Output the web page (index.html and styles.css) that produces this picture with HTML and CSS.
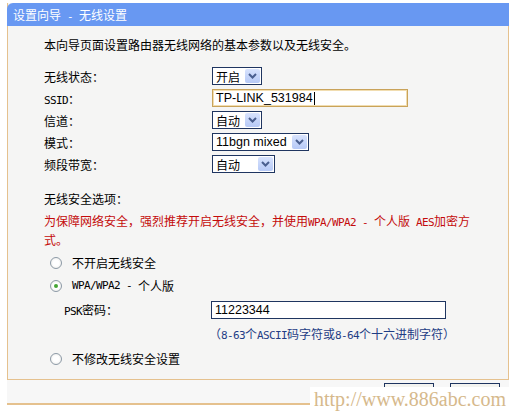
FILE: index.html
```html
<!DOCTYPE html>
<html lang="zh-CN">
<head>
    <meta charset="UTF-8">
    <title>设置向导 - 无线设置</title>
    <link rel="stylesheet" href="styles.css">
</head>
<body>
    <div class="panel">
        <div class="title">设置向导<span class="mono"> - </span>无线设置</div>

        <div class="content">
            <p class="intro">本向导页面设置路由器无线网络的基本参数以及无线安全。</p>

            <!-- 基本参数 -->
            <div class="form">
                <div class="row">
                    <span class="label">无线状态：</span>
                    <div class="select w50"><span class="val">开启</span><span class="drop"><svg width="15" height="14" viewBox="0 0 15 14"><path d="M4 5 L7.5 8.5 L11 5" fill="none" stroke="#4a5f8f" stroke-width="2"/></svg></span></div>
                </div>
                <div class="row">
                    <span class="label"><span class="mono">SSID</span>：</span>
                    <div class="input focus w196"><span class="txt">TP-LINK_531984</span><span class="caret"></span></div>
                </div>
                <div class="row">
                    <span class="label">信道：</span>
                    <div class="select w50"><span class="val">自动</span><span class="drop"><svg width="15" height="14" viewBox="0 0 15 14"><path d="M4 5 L7.5 8.5 L11 5" fill="none" stroke="#4a5f8f" stroke-width="2"/></svg></span></div>
                </div>
                <div class="row">
                    <span class="label">模式：</span>
                    <div class="select w97"><span class="val txt">11bgn mixed</span><span class="drop"><svg width="15" height="14" viewBox="0 0 15 14"><path d="M4 5 L7.5 8.5 L11 5" fill="none" stroke="#4a5f8f" stroke-width="2"/></svg></span></div>
                </div>
                <div class="row">
                    <span class="label">频段带宽：</span>
                    <div class="select w63"><span class="val">自动</span><span class="drop"><svg width="15" height="14" viewBox="0 0 15 14"><path d="M4 5 L7.5 8.5 L11 5" fill="none" stroke="#4a5f8f" stroke-width="2"/></svg></span></div>
                </div>
            </div>

            <!-- 无线安全 -->
            <div class="sec-title">无线安全选项：</div>
            <p class="warn">为保障网络安全，强烈推荐开启无线安全，并使用<span class="mono">WPA/WPA2 - </span>个人版<span class="mono"> AES</span>加密方<br>式。</p>

            <div class="options">
                <div class="opt"><span class="radio"></span>不开启无线安全</div>
                <div class="opt"><span class="radio checked"></span><span class="mono">WPA/WPA2 - </span>个人版</div>
                <div class="psk">
                    <span class="psk-label"><span class="mono">PSK</span>密码：</span>
                    <div class="input w235"><span class="txt">11223344</span></div>
                </div>
                <div class="hint">（<span class="mono">8-63</span>个<span class="mono">ASCII</span>码字符或<span class="mono">8-64</span>个十六进制字符）</div>
                <div class="opt"><span class="radio"></span>不修改无线安全设置</div>
            </div>
        </div>

        <div class="footer">
            <span class="btn"></span>
            <span class="btn"></span>
        </div>
    </div>

    <div class="watermark">http://www.886abc.com</div>
</body>
</html>
```

FILE: styles.css
```css
body {
    margin: 0;
    font-family: "Noto Sans CJK SC", sans-serif;
    font-size: 12px;
    color: #000;
    background: #fff;
    height: 411px;
    position: relative;
    overflow: hidden;
}
.mono {
    font-family: "DejaVu Sans Mono", "Noto Sans CJK SC", monospace;
    font-size: 11px;
    letter-spacing: -0.62px;
    line-height: 1;
    white-space: pre;
}

.panel {
    margin: 3px 0 0 7px;
    width: 502px;
    box-sizing: border-box;
    border: 1px solid #e5c18e;
    border-top: none;
    background: #f5f5f4;
}
.title {
    height: 23px;
    line-height: 23px;
    margin: 0 -1px;
    padding-left: 6px;
    background: #6898f2;
    color: #fff;
    border-top-left-radius: 6px;
}

.content {
    padding: 10px 0 0 36px;
    height: 343px;
}
.intro {
    margin: 0;
    line-height: 18px;
}

.form {
    margin-top: 11px;
}
.row {
    display: flex;
    align-items: center;
    height: 22px;
}
.label {
    width: 168px;
}

.select, .input {
    display: flex;
    align-items: center;
    height: 18px;
    box-sizing: border-box;
    background: #fff;
    border: 1px solid #1f3560;
}
.select .val {
    flex: 1;
    padding-left: 3px;
}
.drop {
    width: 15px;
    height: 14px;
    margin-right: 1px;
    border-radius: 2px;
    background: linear-gradient(#d8e3fd, #b6c9f6);
}
.drop svg {
    display: block;
}
.txt {
    font-family: "Liberation Sans", Arial, sans-serif;
    font-size: 12.5px;
}
.input .txt {
    padding-left: 3px;
}
.input.focus {
    border-color: #c9a35a;
    box-shadow: inset 0 0 0 1px #f1ddb0;
}
.caret {
    width: 1px;
    height: 13px;
    margin-left: 1px;
    background: #000;
}
.w50 { width: 50px; }
.w63 { width: 63px; }
.w97 { width: 97px; }
.w196 { width: 196px; }
.w235 { width: 235px; }

.sec-title {
    margin-top: 14px;
    line-height: 20px;
}
.warn {
    margin: 2px 0 0 0;
    line-height: 19px;
    color: #c40b0b;
}

.options {
    margin-top: 2px;
}
.opt {
    display: flex;
    align-items: center;
    height: 23px;
    padding-left: 6px;
}
.radio {
    width: 12px;
    height: 12px;
    box-sizing: border-box;
    margin-right: 10px;
    border: 1px solid #8d9aa6;
    border-radius: 50%;
    background: radial-gradient(#fff 40%, #e6e6e2);
    display: flex;
    align-items: center;
    justify-content: center;
}
.radio.checked::after {
    content: "";
    width: 4px;
    height: 4px;
    border-radius: 50%;
    background: #45a534;
}
.psk {
    display: flex;
    align-items: center;
    height: 25px;
    padding-left: 20px;
}
.psk-label {
    width: 147px;
}
.hint {
    height: 23px;
    line-height: 23px;
    margin: 0 0 2px 165px;
    color: #1f3d85;
}

.footer {
    border-top: 1px solid #e5c18e;
    border-bottom: 1px solid #e5c18e;
    margin: 0 -1px;
    background: #f7f7f7;
    display: flex;
    justify-content: flex-end;
    gap: 16px;
    padding: 3px 9px 0 0;
    box-sizing: border-box;
    height: 25px;
}
.btn {
    width: 50px;
    height: 20px;
    box-sizing: border-box;
    border: 1px solid #1f3560;
    background: #f4f4f0;
}

.watermark {
    position: absolute;
    left: 310px;
    top: 387px;
    right: 0;
    bottom: 0;
    background: #fff;
    color: #d6b98c;
    font-family: "Liberation Serif", serif;
    font-size: 20px;
    line-height: 24px;
    padding-left: 4px;
}
```
